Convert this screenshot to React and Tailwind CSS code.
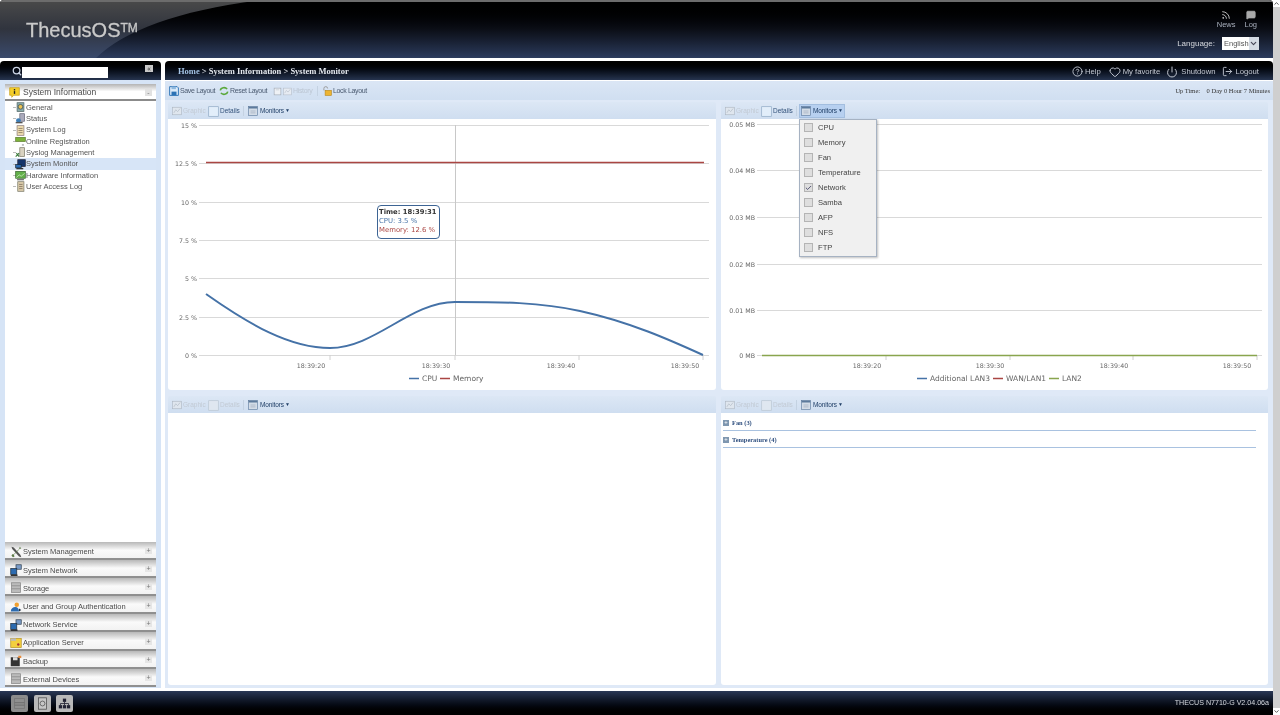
import { ChevronDown, ChevronUp, Rss, MessageSquare, CircleHelp, Heart, Power, LogOut, Search, Check } from "lucide-react";

const SANS = "font-['Liberation_Sans',Arial,sans-serif]";
const SERIF = "font-['Liberation_Serif','Times_New_Roman',serif]";

// tiny app icons, all on a 16 box
function Ico({ kind, className = "w-3 h-3" }) {
  const shapes = {
    general: <><rect x="3" y="1" width="10" height="13" fill="#8aa" stroke="#566" /><circle cx="8" cy="7" r="3.4" fill="#e9c252" stroke="#345" /></>,
    status: <><rect x="7" y="1" width="7" height="11" fill="#aab" stroke="#667" /><circle cx="5" cy="11" r="3.5" fill="#3f7fb8" /><rect x="1" y="13" width="10" height="2" fill="#555" /></>,
    log: <><rect x="3" y="1" width="10" height="14" fill="#eedcae" stroke="#877" /><path d="M5 5h6M5 8h6M5 11h6" stroke="#765" /></>,
    reg: <><rect x="1" y="2" width="14" height="6" fill="#7cb23a" stroke="#5a7a2a" /><rect x="10" y="12" width="3" height="2" fill="#aaa" /></>,
    syslog: <><rect x="7" y="1" width="7" height="13" fill="#d9d2c0" stroke="#776" /><path d="M1 14l5-5M2 9l4 5" stroke="#3a7a3a" strokeWidth="1.6" /></>,
    monitor: <><rect x="4" y="1" width="11" height="10" fill="#15356b" stroke="#223" /><rect x="1" y="8" width="8" height="5" fill="#2c6bb0" stroke="#123" /><rect x="2" y="13" width="10" height="2" fill="#333" /></>,
    hardware: <><rect x="1" y="2" width="14" height="10" fill="#63b04a" stroke="#34602a" /><path d="M2 11l4-4 3 2 5-4" stroke="#d7efc9" fill="none" /><rect x="3" y="13" width="10" height="2" fill="#777" /></>,
    access: <><rect x="4" y="1" width="9" height="14" fill="#d8c9a8" stroke="#776" /><path d="M6 5h5M6 8h5M6 11h5" stroke="#765" /></>,
    info: <><path d="M1 1h14v11H7l-3 3v-3H1z" fill="#f5cf2a" stroke="#c59a10" /><rect x="7" y="3" width="2" height="2" fill="#222" /><rect x="7" y="6" width="2" height="4" fill="#222" /></>,
    tools: <><path d="M2 1l3 1 9 10 1 3-3-1L3 4z" fill="#555" /><path d="M13 1l2 2-4 2-6 6 1 3-2 1-2-2 1-2 3 0 6-6z" fill="#5c7a46" /></>,
    network: <><rect x="8" y="1" width="7" height="6" fill="#7a9cc8" stroke="#345" /><rect x="1" y="6" width="8" height="8" fill="#2c6bb0" stroke="#234" /><rect x="1" y="14" width="9" height="2" fill="#333" /></>,
    storage: <><rect x="2" y="1" width="12" height="13" fill="#bbb" stroke="#888" /><path d="M2 5h12M2 9h12" stroke="#888" /></>,
    users: <><path d="M1 14c0-4 3-6 6-6s5 2 5 6z" fill="#2c6bb0" /><circle cx="9" cy="5" r="3" fill="#f0a030" /><path d="M12 10l3 2-3 2z" fill="#234" /></>,
    app: <><rect x="1" y="2" width="14" height="12" fill="#f3cf3d" stroke="#b8962a" /><rect x="1" y="2" width="7" height="3" fill="#bbb" /><circle cx="11" cy="10" r="1.6" fill="#a33" /></>,
    backup: <><rect x="1" y="3" width="12" height="12" fill="#333" /><rect x="4" y="3" width="6" height="4" fill="#ddd" /><rect x="11" y="1" width="4" height="3" fill="#e88a3a" /></>,
    save: <><path d="M1 1h12l2 2v12H1z" fill="#dcebf9" stroke="#2b72b5" strokeWidth="1.5" /><rect x="4" y="1" width="7" height="4" fill="#8db8de" /><rect x="4" y="9" width="8" height="6" fill="#2b72b5" /></>,
    reset: <><path d="M2 7a6 5 0 0 1 11-2" fill="none" stroke="#5aa83a" strokeWidth="2.6" /><path d="M14 9a6 5 0 0 1-11 2" fill="none" stroke="#5aa83a" strokeWidth="2.6" /></>,
    blank: <><rect x="2" y="2" width="12" height="12" fill="#eef1f5" stroke="#9aa3ae" /><path d="M5 5h6" stroke="#b8c0ca" /></>,
    history: <><rect x="1" y="2" width="14" height="12" fill="#e6ebf2" stroke="#b4bcc8" /><path d="M3 11l3-5 3 3 4-5" stroke="#b4bcc8" fill="none" /></>,
    lock: <><path d="M3 7V4a3 3 0 0 1 6 0" fill="none" stroke="#999" strokeWidth="1.5" /><rect x="5" y="7" width="10" height="8" fill="#edb431" stroke="#b8861c" /></>,
    graph: <><rect x="1" y="2" width="14" height="12" fill="#dfe6ee" stroke="#aeb7c2" /><path d="M3 11l3-5 3 3 4-5" stroke="#aeb7c2" fill="none" /></>,
    details: <><rect x="1" y="1" width="14" height="14" fill="#e2eefa" stroke="#8fa9c4" /></>,
    detailsOff: <><rect x="1" y="1" width="14" height="14" fill="#dfe7f0" stroke="#b9c5d2" /></>,
    monitors: <><rect x="1" y="1" width="14" height="14" fill="#d3dce7" stroke="#5d7a9c" /><rect x="1" y="1" width="14" height="3" fill="#5d7a9c" /><path d="M4 8h8M4 11h8" stroke="#9aa9ba" /></>,
    nas: <><rect x="2" y="2" width="12" height="12" fill="#8f8f8f" stroke="#777" /><path d="M2 7h12M2 10h12" stroke="#666" /></>,
    disk: <><rect x="3" y="1" width="10" height="14" fill="#c6c6c6" stroke="#555" /><circle cx="8" cy="8" r="3" fill="none" stroke="#555" /></>,
    tree: <><rect x="6" y="2" width="4" height="4" fill="#223" /><rect x="1" y="10" width="4" height="4" fill="#223" /><rect x="6" y="10" width="4" height="4" fill="#223" /><rect x="11" y="10" width="4" height="4" fill="#223" /><path d="M8 6v4M3 10V8h10v2" stroke="#223" fill="none" /></>,
  };
  return <svg viewBox="0 0 16 16" className={`shrink-0 ${className}`}>{shapes[kind]}</svg>;
}

const TREE = [
  ["General", "general"],
  ["Status", "status"],
  ["System Log", "log"],
  ["Online Registration", "reg"],
  ["Syslog Management", "syslog"],
  ["System Monitor", "monitor"],
  ["Hardware Information", "hardware"],
  ["User Access Log", "access"],
];

const GROUPS = [
  ["System Management", "tools"],
  ["System Network", "network"],
  ["Storage", "storage"],
  ["User and Group Authentication", "users"],
  ["Network Service", "network"],
  ["Application Server", "app"],
  ["Backup", "backup"],
  ["External Devices", "storage"],
];

const MONITORS = ["CPU", "Memory", "Fan", "Temperature", "Network", "Samba", "AFP", "NFS", "FTP"];

function Header() {
  return (
    <div className="relative h-[58px] shrink-0 overflow-hidden rounded-t-[4px] bg-gradient-to-b from-[#000000] via-[#0b0e16] to-[#2c3c5e]">
      <svg className="absolute left-0 top-0 w-[300px] h-[58px]" viewBox="0 0 300 58">
        <defs>
          <linearGradient id="sw" x1="0" y1="0" x2="0" y2="1">
            <stop offset="0" stopColor="#4a4a4a" />
            <stop offset="0.5" stopColor="#30343e" />
            <stop offset="1" stopColor="#3a4a6c" />
          </linearGradient>
        </defs>
        <path d="M0 0H262C180 10 125 30 96 58H0Z" fill="url(#sw)" />
      </svg>
      <div className="absolute inset-x-0 top-0 h-[2px] bg-[#6c6c6c]" />
      <div className="relative flex h-full items-start justify-between">
        <div className={`ml-[26px] mt-[16px] text-[20px] leading-[28px] text-[#c9c9c9] [-webkit-text-stroke:0.3px_#c9c9c9] ${SANS}`}>
          ThecusOS<span className="relative top-[-5px] text-[12px] leading-none">TM</span>
        </div>
        <div className={`mr-[14px] flex flex-col items-end text-[#a9b0bd] ${SANS}`}>
          <div className="mt-[10px] flex gap-[9px] mr-[2px] text-[7.5px] leading-[9px]">
            <div className="flex flex-col items-center"><Rss size={10} strokeWidth={2.4} className="text-[#bbb]" /><span>News</span></div>
            <div className="flex flex-col items-center"><MessageSquare size={10} fill="#aaa" className="text-[#aaa]" /><span>Log</span></div>
          </div>
          <div className="mt-[8px] flex items-center gap-[7px] text-[8px] text-[#d5d8de]">
            <span>Language:</span>
            <div className="flex h-[13px] w-[37px] items-center bg-white text-[7.5px] text-[#555]">
              <span className="flex-1 pl-[2px]">English</span>
              <span className="flex h-full w-[11px] items-center justify-center bg-[#d4dbe4]"><ChevronDown size={9} strokeWidth={3} className="text-[#445]" /></span>
            </div>
          </div>
        </div>
      </div>
    </div>
  );
}

function Sidebar() {
  return (
    <div className="flex w-[161px] shrink-0 flex-col">
      <div className="flex h-[19px] shrink-0 items-center rounded-t-[4px] bg-gradient-to-b from-[#000000] to-[#26344f] pl-[12px] pr-[8px]">
        <Search size={10} strokeWidth={3} className="text-[#cdd6e6]" />
        <div className="mt-[3px] h-[11px] w-[86px] bg-white" />
        <div className="ml-auto mb-[4px] flex h-[7px] w-[8px] items-center justify-center bg-[#c8c8c8] text-[7px] leading-none text-[#444]">«</div>
      </div>
      <div className={`flex flex-1 flex-col bg-[#d6e4f6] px-[5px] pt-[4px] pb-[1px] ${SANS}`}>
        <div className="flex h-[17px] shrink-0 items-center border-b-[2px] border-[#8b8b8b] bg-gradient-to-b from-[#b4b4b4] via-[#ffffff] to-[#ffffff] pl-[4px] pr-[4px] pt-[1px] text-[8.5px] text-[#4a4a4a]">
          <Ico kind="info" className="w-[11px] h-[11px]" />
          <span className="ml-[3px]">System Information</span>
          <span className="ml-auto flex h-[7px] w-[7px] items-center justify-center bg-[#e2e2e2] text-[7px] leading-none text-[#777]">-</span>
        </div>
        <div className="flex-1 bg-white pt-[1px]">
          {TREE.map(([label, icon]) => (
            <div key={label} className={`flex h-[11.3px] items-center pl-[8px] text-[7.5px] leading-none text-[#555] ${label === "System Monitor" ? "bg-[#d7e5f7]" : ""}`}>
              <span className="w-[2px] border-t border-dotted border-[#bbb]" />
              <Ico kind={icon} className="w-[11px] h-[11px]" />
              <span>{label}</span>
            </div>
          ))}
        </div>
        {GROUPS.map(([label, icon]) => (
          <div key={label} className="flex h-[18.2px] shrink-0 items-center border-b-[2px] border-[#8f8f8f] bg-gradient-to-b from-[#b8b8b8] via-[#fafafa] to-[#f2f2f2] pl-[5px] pr-[4px] pt-[5px] text-[7.5px] text-[#4a4a4a]">
            <Ico kind={icon} className="w-[12px] h-[12px]" />
            <span className="ml-[1px]">{label}</span>
            <span className="ml-auto mb-[3px] flex h-[7px] w-[7px] items-center justify-center bg-[#e6e6e6] text-[7px] leading-none text-[#777]">+</span>
          </div>
        ))}
      </div>
    </div>
  );
}

function PanelBar({ detailsOff = false, active = false }) {
  return (
    <div className={`flex h-[17px] shrink-0 items-center rounded-t-[2px] bg-gradient-to-b from-[#dce7f5] to-[#cfdef0] pl-[4px] pt-[1px] text-[6.5px] ${SANS}`}>
      <Ico kind="graph" className="w-[10px] h-[10px]" />
      <span className="ml-[1px] w-[22px] text-[#c2cad4]">Graphic</span>
      <span className="ml-[3px] flex items-center">
        <Ico kind={detailsOff ? "detailsOff" : "details"} className="w-[11px] h-[11px]" />
        <span className={`ml-[1px] ${detailsOff ? "text-[#c2cad4]" : "text-[#33527a]"}`}>Details</span>
      </span>
      <span className="ml-[3px] mr-[2px] h-[10px] border-l border-[#c4d2e2]" />
      <span className={`flex h-[14px] items-center px-[1px] tracking-[-0.1px] ${active ? "bg-[#b7d0f0] border border-[#a3bedf]" : "border border-transparent"}`}>
        <Ico kind="monitors" className="w-[10px] h-[10px]" />
        <span className="ml-[2px] text-[#1f3e66]">Monitors</span>
        <span className="ml-[1px] text-[5px] text-[#1f3e66]">▼</span>
      </span>
    </div>
  );
}

function Grid({ rows, x1, x2, xTicks, xLabels }) {
  return (
    <g fontFamily="'DejaVu Sans', Verdana, sans-serif" fontSize="6.3" fill="#666">
      {rows.map(([y, label]) => (
        <g key={label}>
          <line x1={x1} x2={x2} y1={y} y2={y} stroke="#d9d9d9" />
          <text x={x1 - 2} y={y + 2.5} textAnchor="end">{label}</text>
        </g>
      ))}
      {xTicks.map((x, i) => (
        <g key={x}>
          <line x1={x} x2={x} y1={355} y2={360} stroke="#d0d0d0" />
          <text x={xLabels[i]} y={368} textAnchor="middle">18:39:{["20", "30", "40", "50"][i]}</text>
        </g>
      ))}
    </g>
  );
}

function Legend({ items }) {
  return (
    <g fontFamily="'DejaVu Sans', Verdana, sans-serif" fontSize="7.5" fill="#666">
      {items.map(([x, color, label]) => (
        <g key={label}>
          <line x1={x} x2={x + 10} y1={378.5} y2={378.5} stroke={color} strokeWidth="1.5" />
          <text x={x + 13} y={381}>{label}</text>
        </g>
      ))}
    </g>
  );
}

function CpuChart() {
  return (
    <svg viewBox="168 119 548 271" className="w-full flex-1">
      <Grid
        x1={199}
        x2={709}
        rows={[[125.5, "15 %"], [163.5, "12.5 %"], [202.5, "10 %"], [240.5, "7.5 %"], [278.5, "5 %"], [317.5, "2.5 %"], [355.5, "0 %"]]}
        xTicks={[330, 455, 579, 703]}
        xLabels={[311, 436, 561, 685]}
      />
      <line x1={455.5} x2={455.5} y1={125} y2={355} stroke="#c8c8c8" />
      <line x1={206} x2={704} y1={162.5} y2={162.5} stroke="#aa4643" strokeWidth="1.5" />
      <path d="M206 294C250 325 290 348 330 348C375 348 410 302 455 302C500 302 540 302 580 311C630 322 670 340 703 355" fill="none" stroke="#4572a7" strokeWidth="2" />
      <Legend items={[[409, "#4572a7", "CPU"], [440, "#aa4643", "Memory"]]} />
    </svg>
  );
}

function NetChart() {
  return (
    <svg viewBox="721 119 547 271" className="w-full flex-1">
      <Grid
        x1={757}
        x2={1262}
        rows={[[124.5, "0.05 MB"], [170.5, "0.04 MB"], [217.5, "0.03 MB"], [264.5, "0.02 MB"], [310.5, "0.01 MB"], [355.5, "0 MB"]]}
        xTicks={[886, 1010, 1133, 1257]}
        xLabels={[867, 990, 1114, 1237]}
      />
      <line x1={762} x2={1257} y1={355.5} y2={355.5} stroke="#89a54e" strokeWidth="1.5" />
      <Legend items={[[917, "#4572a7", "Additional LAN3"], [993, "#aa4643", "WAN/LAN1"], [1049, "#89a54e", "LAN2"]]} />
    </svg>
  );
}

function Tooltip() {
  return (
    <div className="absolute left-[209px] top-[103px] h-[34px] w-[63px] rounded-[4px] border-[1.5px] border-[#3d6494] bg-white px-[1px] py-[2px] text-[6.9px] leading-[9px] font-['DejaVu_Sans',Verdana,sans-serif]">
      <div className="font-bold whitespace-nowrap text-[6.8px] text-[#333]">Time: 18:39:31</div>
      <div className="text-[#4572a7] whitespace-nowrap">CPU: 3.5 %</div>
      <div className="text-[#aa4643] whitespace-nowrap">Memory: 12.6 %</div>
    </div>
  );
}

function MonitorMenu() {
  return (
    <div className={`absolute left-[78px] top-[17px] flex h-[138px] w-[78px] flex-col border border-[#a6b2c2] bg-[#f0f0f0] text-[7.6px] text-[#444] shadow-[1px_1px_2px_rgba(0,0,0,0.25)] ${SANS}`}>
      {MONITORS.map((m) => (
        <div key={m} className="flex h-[15px] items-center pl-[4px]">
          <span className="flex h-[9px] w-[9px] items-center justify-center border border-[#b4b4b4] bg-[#dedede]">
            {m === "Network" && <Check size={8} strokeWidth={3} className="text-[#446]" />}
          </span>
          <span className="ml-[5px]">{m}</span>
        </div>
      ))}
    </div>
  );
}

function Panel({ children, ...bar }) {
  return (
    <div className="relative flex min-w-0 flex-col overflow-visible">
      <PanelBar {...bar} />
      <div className="flex flex-1 flex-col overflow-hidden rounded-b-[3px] bg-white">{children}</div>
    </div>
  );
}

function Sensors() {
  return (
    <div className={`pl-[2px] pr-[12px] pt-[3px] text-[6.4px] font-bold text-[#2f4f7f] ${SERIF}`}>
      {["Fan (3)", "Temperature (4)"].map((s) => (
        <div key={s} className="mb-[2px] flex h-[15px] items-center border-b border-[#a9c2e0]">
          <span className="mr-[3px] flex h-[6px] w-[6px] items-center justify-center bg-[#7f97b0] text-[6px] leading-none text-white">+</span>
          {s}
        </div>
      ))}
    </div>
  );
}

function Content() {
  return (
    <div className="flex min-w-0 flex-1 flex-col">
      <div className="flex h-[19px] shrink-0 items-center rounded-t-[4px] bg-gradient-to-b from-[#000000] to-[#26344f] pl-[13px] pr-[14px] pt-[2px]">
        <span className={`text-[8.5px] font-bold text-[#e4e8ee] ${SERIF}`}>
          <span className="text-[#a5c4e6]">Home</span> &gt; System Information &gt; System Monitor
        </span>
        <div className={`ml-auto flex items-center text-[7.7px] text-[#c3c8d2] ${SANS}`}>
          <CircleHelp size={11} />
          <span className="ml-[2px]">Help</span>
          <Heart size={12} className="ml-[8px]" />
          <span className="ml-[2px]">My favorite</span>
          <Power size={12} className="ml-[6px]" />
          <span className="ml-[3px]">Shutdown</span>
          <LogOut size={11} className="ml-[7px]" />
          <span className="ml-[2px]">Logout</span>
        </div>
      </div>
      <div className="flex flex-1 flex-col border-t border-white bg-[#dfe9f7]">
        <div className={`flex h-[19px] shrink-0 items-center whitespace-nowrap bg-gradient-to-b from-[#dbe6f5] to-[#d0dff1] pl-[4px] pr-[3px] pt-[1px] text-[7px] tracking-[-0.35px] text-[#4a5a70] ${SANS}`}>
          <Ico kind="save" className="w-[10px] h-[10px]" />
          <span className="ml-[1px] w-[35px]">Save Layout</span>
          <Ico kind="reset" className="ml-[4px] w-[10px] h-[10px]" />
          <span className="ml-[1px] w-[37px]">Reset Layout</span>
          <Ico kind="blank" className="ml-[6px] w-[9px] h-[9px]" />
          <Ico kind="history" className="ml-[1px] w-[9px] h-[9px]" />
          <span className="ml-[1px] w-[21px] text-[#bcc6d3]">History</span>
          <span className="ml-[3px] mr-[4px] h-[10px] border-l border-[#c4d2e2]" />
          <Ico kind="lock" className="w-[10px] h-[10px]" />
          <span className="ml-[1px]">Lock Layout</span>
          <span className={`ml-auto text-[6.5px] tracking-normal text-[#333] ${SERIF}`}>Up Time:&nbsp;&nbsp;&nbsp;&nbsp;0 Day 0 Hour 7 Minutes</span>
        </div>
        <div className="grid flex-1 grid-cols-[548px_547px] grid-rows-[288px_289px] gap-x-[5px] gap-y-[6px] pl-[3px] pt-[2px]">
          <Panel>
            <CpuChart />
            <Tooltip />
          </Panel>
          <Panel active>
            <NetChart />
            <MonitorMenu />
          </Panel>
          <Panel detailsOff />
          <Panel detailsOff>
            <Sensors />
          </Panel>
        </div>
      </div>
    </div>
  );
}

function Footer() {
  return (
    <div className={`flex h-[24px] shrink-0 items-center bg-gradient-to-b from-[#2a3856] to-[#000000] pl-[11px] pr-[4px] ${SANS}`}>
      <span className="mr-[6px] flex h-[17px] w-[17px] items-center justify-center rounded-[2px] bg-[#8c8c8c]"><Ico kind="nas" className="w-[13px] h-[13px]" /></span>
      <span className="mr-[5px] flex h-[17px] w-[17px] items-center justify-center rounded-[2px] bg-[#b9b9b9]"><Ico kind="disk" className="w-[13px] h-[13px]" /></span>
      <span className="flex h-[17px] w-[17px] items-center justify-center rounded-[2px] bg-[#b9b9b9]"><Ico kind="tree" className="w-[13px] h-[13px]" /></span>
      <span className="ml-auto text-[7.1px] text-[#d5d8de]">THECUS N7710-G V2.04.06a</span>
    </div>
  );
}

export default function App() {
  return (
    <div className="flex h-[715px] w-[1280px] overflow-hidden bg-white blur-[0.35px]">
      <div className="flex w-[1273px] shrink-0 flex-col">
        <Header />
        <div className="flex flex-1 gap-[4px] pt-[3px] pb-[3px]">
          <Sidebar />
          <Content />
        </div>
        <Footer />
      </div>
      <div className="flex w-[7px] flex-col items-center justify-between bg-[#cfcfcf]">
        <ChevronUp size={7} strokeWidth={3} className="bg-white text-[#444]" />
        <ChevronDown size={7} strokeWidth={3} className="bg-white text-[#444]" />
      </div>
    </div>
  );
}
